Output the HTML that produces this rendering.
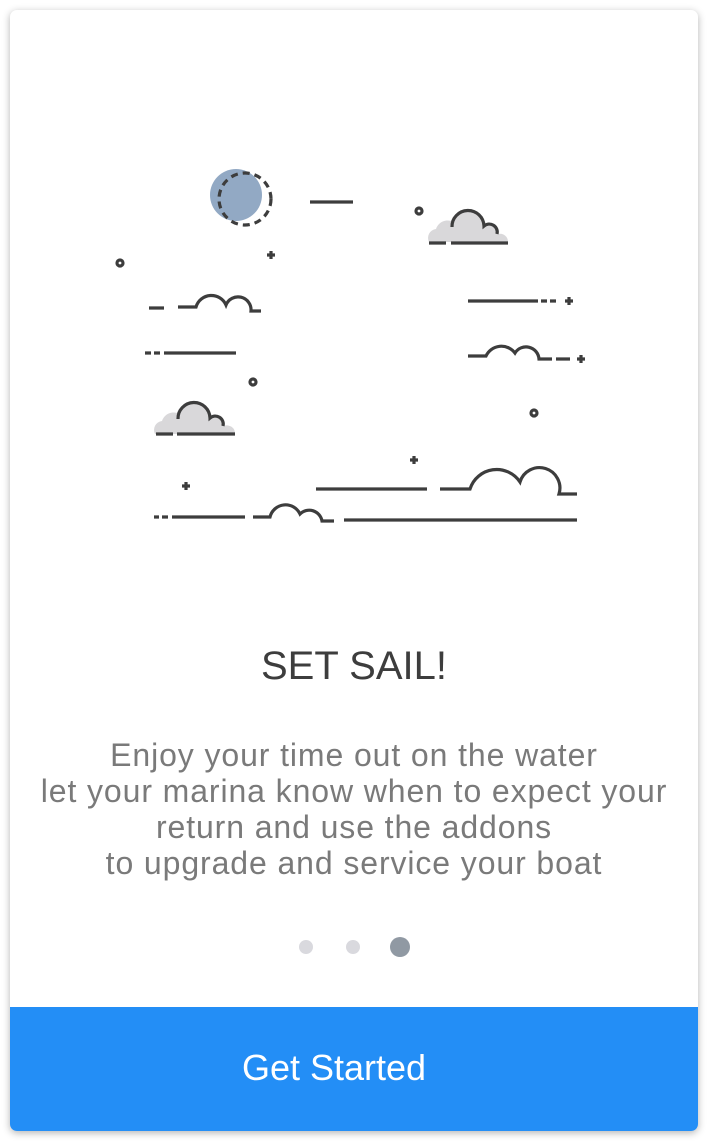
<!DOCTYPE html>
<html><head><meta charset="utf-8"><style>
html,body{margin:0;padding:0;background:#fff;width:709px;height:1141px;overflow:hidden}
.card{position:absolute;left:10px;top:10px;width:688px;height:1121px;background:#fff;border-radius:7px;box-shadow:0 2px 8px rgba(0,0,0,.3);overflow:hidden}
.btn{position:absolute;left:0;bottom:0;width:648px;padding-right:40px;height:124px;background:#238ef6;color:#fff;font:36px "Liberation Sans",sans-serif;text-align:center;line-height:122px}
h1{position:absolute;left:0;top:634px;width:688px;margin:0;text-align:center;font:normal 40px "Liberation Sans",sans-serif;color:#3d3d3d}
p{position:absolute;left:0;top:727px;width:688px;margin:0;text-align:center;font:32px/36px "Liberation Sans",sans-serif;letter-spacing:0.9px;color:#7a7a7a}
svg{position:absolute;left:0;top:0}
</style></head><body>
<div class="card">
<h1>SET SAIL!</h1>
<p>Enjoy your time out on the water<br>let your marina know when to expect your<br>return and use the addons<br>to upgrade and service your boat</p>
<div class="btn">Get Started</div>
</div>
<svg width="709" height="1141" viewBox="0 0 709 1141">
<circle cx="236" cy="195" r="26" fill="#92a9c4"/>
<g fill="none" stroke="#3d3d3d" stroke-width="3.2">
<circle cx="245" cy="199" r="26" stroke-dasharray="7 5"/>
<line x1="310" y1="202" x2="353" y2="202"/>
<circle cx="419" cy="211" r="3"/><circle cx="120" cy="263" r="3"/><circle cx="253" cy="382" r="3"/><circle cx="534" cy="413" r="3"/>
<path d="M267 255h8M271 251v8M565 301h8M569 297v8M577 359h8M581 355v8M410 460h8M414 456v8M182 486h8M186 482v8"/>
<path d="M149 308h15M178 307h18A16 16 0 0 1 226 305A13 13 0 0 1 251 311h10"/>
<path d="M145 353h6M154 353h6M164 353h72"/>
<path d="M468 301h70M541 301h6M550 301h6"/>
<path d="M468 356h18A17 17 0 0 1 515 353A13 13 0 0 1 539 359h13M556 359h14"/>
<path d="M316 489h111M440 489h30A28 28 0 0 1 520 482A20 20 0 0 1 559 494h18"/>
<path d="M154 517h5M162 517h6M172 517h73M253 517h17A16 16 0 0 1 300 514A13 13 0 0 1 322 521h12M344 520h233"/>
</g>
<g>
<path d="M429 242A9 9 0 0 1 436 229A12 12 0 0 1 451 221A17 17 0 0 1 484 226A9 9 0 0 1 498 234A8 8 0 0 1 508 242Z" fill="#d9d8da"/>
<path d="M452 227A16 16 0 0 1 484 226A8 8 0 0 1 497 234" fill="none" stroke="#3d3d3d" stroke-width="3.2"/>
<path d="M429 243h17M451 243h57" stroke="#3d3d3d" stroke-width="3.2"/>
<path d="M155 434A9 9 0 0 1 162 421A12 12 0 0 1 177 413A17 17 0 0 1 210 418A9 9 0 0 1 224 426A8 8 0 0 1 235 434Z" fill="#d9d8da"/>
<path d="M178 419A16 16 0 0 1 210 418A8 8 0 0 1 223 426" fill="none" stroke="#3d3d3d" stroke-width="3.2"/>
<path d="M156 434h17M177 434h58" stroke="#3d3d3d" stroke-width="3.2"/>
</g>
<circle cx="306" cy="947" r="7" fill="#d9d9de"/>
<circle cx="353" cy="947" r="7" fill="#d9d9de"/>
<circle cx="400" cy="947" r="10" fill="#9099a3"/>
</svg>
</body></html>
